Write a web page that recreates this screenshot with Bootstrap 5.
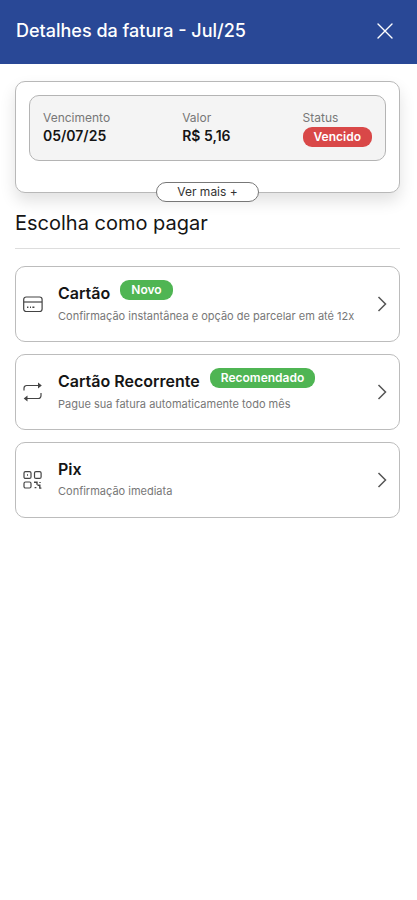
<!DOCTYPE html>
<html lang="pt-BR">
<head>
<meta charset="utf-8">
<meta name="viewport" content="width=device-width, initial-scale=1">
<title>Detalhes da fatura</title>
<link href="https://cdn.jsdelivr.net/npm/bootstrap@5.3.0/dist/css/bootstrap.min.css" rel="stylesheet">
<style>
body { font-family: Inter, "Liberation Sans", sans-serif; color: #151515; background: #fff; }
.topbar { background: #294896; height: 64px; padding: 0 22px 3px 16px; }
.topbar-title { font-size: 18px; line-height: 24px; font-weight: 500; }
.close-btn { width: 20px; height: 20px; }
.content { padding: 17px 17px 17px 15px; }
.invoice { border: 1px solid #b8b8b8; border-radius: 10px; padding: 13px 13px 31px; box-shadow: 0 8px 16px rgba(0,0,0,.12); }
.summary { background: #f4f4f4; border: 1px solid #b4b4b4; border-radius: 10px; padding: 13px; }
.summary-label { font-size: 12px; line-height: 18px; font-weight: 400; color: #777; }
.summary-value { font-size: 14px; line-height: 18px; font-weight: 600; }
.tag { font-size: 12px; line-height: 16px; font-weight: 600; color: #fff; border-radius: 9px; padding: 2px 11px; }
.tag-danger { background: #d94848; }
.tag-success { background: #4fb553; }
.more-row { height: 20px; margin-top: -11px; }
.more-btn { position: relative; font-size: 12px; line-height: 18px; color: #333; background: #fff; border: 1px solid #777; border-radius: 10px; padding: 0 20px; }
.section-title { font-size: 20px; line-height: 28px; font-weight: 400; padding-bottom: 11px; border-bottom: 1px solid #ddd; margin: 7px 0 17px; }
.options { gap: 12px; }
.option { min-height: 76px; background: #fff; color: #151515; border: 1px solid #bcbcbc; border-radius: 10px; padding: 0 12px 0 6px; }
.option-icon { width: 22px; height: 22px; margin-right: 14px; color: #444; }
.option-body { padding-bottom: 2px; }
.option-head { gap: 10px; line-height: 24px; }
.option-name { font-size: 16px; font-weight: 600; }
.option-tag { margin-bottom: 6px; }
.option-text { font-size: 11px; line-height: 20px; color: #777; }
.chevron { width: 10px; height: 18px; color: #555; }
</style>
</head>
<body>
<header class="topbar d-flex align-items-center justify-content-between text-white">
  <h1 class="topbar-title m-0">Detalhes da fatura - Jul/25</h1>
  <button type="button" class="close-btn btn p-0 border-0 text-white d-flex align-items-center justify-content-center" aria-label="Fechar">
    <svg width="16" height="16" viewBox="0 0 16 16" fill="none" stroke="currentColor" stroke-width="1.4" stroke-linecap="round"><path d="M1 1l14 14M15 1L1 15"/></svg>
  </button>
</header>
<main class="content">
  <section class="invoice bg-white">
    <dl class="summary d-flex justify-content-between m-0">
      <div><dt class="summary-label">Vencimento</dt><dd class="summary-value m-0">05/07/25</dd></div>
      <div><dt class="summary-label">Valor</dt><dd class="summary-value m-0">R$ 5,16</dd></div>
      <div><dt class="summary-label">Status</dt><dd class="tag tag-danger m-0">Vencido</dd></div>
    </dl>
  </section>
  <div class="more-row d-flex justify-content-center">
    <button type="button" class="more-btn">Ver mais +</button>
  </div>
  <h2 class="section-title">Escolha como pagar</h2>
  <div class="options d-grid">
    <button type="button" class="option d-flex align-items-center text-start w-100">
      <svg class="option-icon flex-shrink-0" viewBox="0 0 22 22" fill="none" stroke="currentColor" stroke-width="1.2"><rect x="1.7" y="4" width="18.4" height="14.5" rx="2.5"/><path d="M2 9h18"/><path d="M5 14.2h1.4M8 14.2h1M10.4 14.2h2" stroke-width="1.5"/></svg>
      <span class="option-body flex-grow-1">
        <span class="option-head d-flex align-items-center"><span class="option-name">Cartão</span><span class="tag tag-success option-tag">Novo</span></span>
        <span class="option-text d-block">Confirmação instantânea e opção de parcelar em até 12x</span>
      </span>
      <svg class="chevron flex-shrink-0" viewBox="0 0 10 18" fill="none" stroke="currentColor" stroke-width="1.5"><path d="M1.5 2l7 7-7 7"/></svg>
    </button>
    <button type="button" class="option d-flex align-items-center text-start w-100">
      <svg class="option-icon flex-shrink-0" viewBox="0 0 22 22" fill="none" stroke="currentColor" stroke-width="1.2" stroke-linejoin="round"><path d="M2 9.5V7.2a2.7 2.7 0 0 1 2.7-2.7H18M19 12v2.8a2.7 2.7 0 0 1-2.7 2.7H3"/><path d="M16 1.5l3.8 3L16 7.5zM5.5 14.5L1.7 17.5l3.8 3z" fill="currentColor" stroke="none"/></svg>
      <span class="option-body flex-grow-1">
        <span class="option-head d-flex align-items-center"><span class="option-name">Cartão Recorrente</span><span class="tag tag-success option-tag">Recomendado</span></span>
        <span class="option-text d-block">Pague sua fatura automaticamente todo mês</span>
      </span>
      <svg class="chevron flex-shrink-0" viewBox="0 0 10 18" fill="none" stroke="currentColor" stroke-width="1.5"><path d="M1.5 2l7 7-7 7"/></svg>
    </button>
    <button type="button" class="option d-flex align-items-center text-start w-100">
      <svg class="option-icon flex-shrink-0" viewBox="0 0 22 22" fill="none" stroke="currentColor" stroke-width="1.2"><rect x="2" y="2.6" width="7" height="6.8" rx="1.5"/><rect x="12.5" y="2.6" width="6.6" height="6.8" rx="1.5"/><rect x="2" y="13" width="7" height="6" rx="1.5"/><path d="M5 6h1M12 13.2h3v2.6M18 13v1M15.5 16.2h2.3v2.9h1.6M12.6 18.6h1.8" stroke-width="1.4"/></svg>
      <span class="option-body flex-grow-1">
        <span class="option-head d-flex align-items-center"><span class="option-name">Pix</span></span>
        <span class="option-text d-block">Confirmação imediata</span>
      </span>
      <svg class="chevron flex-shrink-0" viewBox="0 0 10 18" fill="none" stroke="currentColor" stroke-width="1.5"><path d="M1.5 2l7 7-7 7"/></svg>
    </button>
  </div>
</main>
<script src="https://cdn.jsdelivr.net/npm/bootstrap@5.3.0/dist/js/bootstrap.bundle.min.js"></script>
</body>
</html>
